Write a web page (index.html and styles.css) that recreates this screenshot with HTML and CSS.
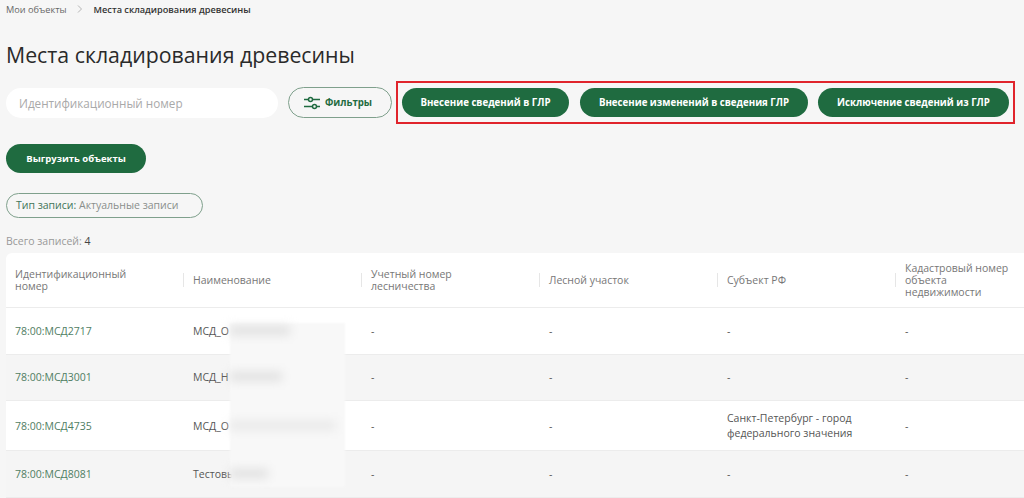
FILE: index.html
```html
<!DOCTYPE html>
<html lang="en">
<head>
    <meta charset="UTF-8">
    <meta name="viewport" content="width=device-width, initial-scale=1.0">
    <title>Места складирования древесины</title>
    <link rel="stylesheet" href="styles.css">
</head>
<body>
    <div class="breadcrumbs">
        <span class="crumb">Мои объекты</span>
        <svg class="crumb-arrow" width="6" height="8" viewBox="0 0 6 8"><path d="M1 0.5L4.5 4L1 7.5" fill="none" stroke="#b5b5b5" stroke-width="1"/></svg>
        <span class="crumb-current">Места складирования древесины</span>
    </div>

    <h1>Места складирования древесины</h1>

    <div class="toolbar">
        <input type="text" class="search-bar" placeholder="Идентификационный номер">
        <button class="filter-button">
            <svg width="16" height="14" viewBox="0 0 16 14" fill="none" stroke="#1f6b40" stroke-width="1.5">
                <path d="M0 3.5H4M9 3.5H16M0 10.5H8M13 10.5H16"/>
                <circle cx="6.5" cy="3.5" r="2"/>
                <circle cx="10.5" cy="10.5" r="2"/>
            </svg>
            Фильтры
        </button>
        <div class="highlight">
            <button class="green-button btn-add">Внесение сведений в ГЛР</button>
            <button class="green-button btn-change">Внесение изменений в сведения ГЛР</button>
            <button class="green-button btn-remove">Исключение сведений из ГЛР</button>
        </div>
    </div>

    <button class="green-button btn-export">Выгрузить объекты</button>

    <div class="chip"><b>Тип записи:</b> Актуальные записи</div>

    <div class="total">Всего записей: <span>4</span></div>

    <div class="table">
        <div class="row head">
            <div class="cell">Идентификационный номер</div>
            <div class="cell">Наименование</div>
            <div class="cell">Учетный номер лесничества</div>
            <div class="cell">Лесной участок</div>
            <div class="cell">Субъект РФ</div>
            <div class="cell cell-narrow">Кадастровый номер объекта недвижимости</div>
        </div>
        <div class="row">
            <div class="cell link">78:00:МСД2717</div>
            <div class="cell">МСД_О</div>
            <div class="cell">-</div>
            <div class="cell">-</div>
            <div class="cell">-</div>
            <div class="cell">-</div>
        </div>
        <div class="row">
            <div class="cell link">78:00:МСД3001</div>
            <div class="cell">МСД_Н</div>
            <div class="cell">-</div>
            <div class="cell">-</div>
            <div class="cell">-</div>
            <div class="cell">-</div>
        </div>
        <div class="row">
            <div class="cell link">78:00:МСД4735</div>
            <div class="cell">МСД_О</div>
            <div class="cell">-</div>
            <div class="cell">-</div>
            <div class="cell">Санкт-Петербург - город федерального значения</div>
            <div class="cell">-</div>
        </div>
        <div class="row">
            <div class="cell link">78:00:МСД8081</div>
            <div class="cell">Тестовы</div>
            <div class="cell">-</div>
            <div class="cell">-</div>
            <div class="cell">-</div>
            <div class="cell">-</div>
        </div>
    </div>

    <!-- blurred patch over the names -->
    <div class="redact">
        <div class="smudge s1"></div>
        <div class="smudge s2"></div>
        <div class="smudge s3"></div>
        <div class="smudge s4"></div>
    </div>
</body>
</html>
```

FILE: styles.css
```css
html, body {
    height: 498px;
    overflow: hidden;
}
body {
    background: #f6f6f6;
    color: #333;
    font-family: "Open Sans", Arial, sans-serif;
    margin: 0;
    padding: 0 0 0 6px;
    position: relative;
}
.breadcrumbs {
    display: flex;
    align-items: center;
    height: 18px;
    font-size: 9.2px;
}
.crumb {
    color: #666;
}
.crumb-arrow {
    margin: 0 11px 0 10px;
}
.crumb-current {
    color: #333;
    font-weight: 600;
}
h1 {
    font-size: 21.3px;
    font-weight: 400;
    line-height: 30px;
    color: #2a2a2a;
    margin: 22px 0 0;
}
.toolbar {
    display: flex;
    align-items: center;
    height: 43px;
    margin-top: 11px;
}
.search-bar {
    width: 272px;
    height: 30px;
    box-sizing: border-box;
    padding: 0 13px;
    border: none;
    border-radius: 15px;
    background: #fff;
    font-family: inherit;
    font-size: 11.7px;
    outline: none;
}
.search-bar::placeholder {
    color: #a9a9a9;
}
.filter-button {
    display: flex;
    align-items: center;
    justify-content: center;
    gap: 5px;
    width: 104px;
    height: 31px;
    margin-left: 10px;
    padding: 0 4px 0 0;
    background: transparent;
    border: 1px solid #7fa08c;
    border-radius: 16px;
    color: #1f6b40;
    font-family: inherit;
    font-size: 9.7px;
    font-weight: 700;
}
.highlight {
    display: flex;
    align-items: center;
    gap: 10px;
    box-sizing: border-box;
    width: 619px;
    height: 43px;
    margin-left: 4px;
    padding: 0 4px;
    border: 2px solid #e0242c;
}
.green-button {
    height: 29px;
    border: none;
    border-radius: 15px;
    padding: 0;
    background: #1f6b40;
    color: #fff;
    font-family: inherit;
    font-size: 9.7px;
    font-weight: 700;
}
.btn-add {
    width: 167px;
}
.btn-change {
    width: 228px;
    margin-left: 1px;
}
.btn-remove {
    width: 191px;
}
.btn-export {
    display: block;
    width: 140px;
    margin-top: 20px;
    font-size: 9.5px;
}
.chip {
    box-sizing: border-box;
    width: 197px;
    height: 25px;
    line-height: 23px;
    margin-top: 20px;
    padding-left: 9px;
    border: 1px solid #7fa08c;
    border-radius: 13px;
    color: #8a8f8c;
    font-size: 10.5px;
}
.chip b {
    color: #3f7458;
    font-weight: 500;
}
.total {
    height: 16px;
    line-height: 16px;
    margin-top: 15px;
    color: #999;
    font-size: 10.5px;
}
.total span {
    color: #444;
}
.table {
    width: 1200px;
    margin-top: 4px;
    font-size: 10.5px;
    line-height: 15px;
    color: #555;
}
.row {
    display: grid;
    grid-template-columns: 177px repeat(5, 178px);
    align-items: center;
    min-height: 45.5px;
    background: #fff;
    border-bottom: 1px solid #ececec;
}
.row:nth-child(odd) {
    background: #f5f5f5;
}
.row.head {
    height: 54px;
    background: #fff;
    border-radius: 6px 0 0 0;
    line-height: 12px;
    color: #777;
}
.cell {
    padding: 10px 30px 9px 10px;
}
.cell:first-child {
    padding-left: 9px;
}
.row.head .cell {
    position: relative;
    padding-top: 0;
    padding-bottom: 0;
}
.row.head .cell + .cell::before {
    content: "";
    position: absolute;
    left: 0;
    top: 50%;
    height: 14px;
    margin-top: -7px;
    border-left: 1px solid #e6e6e6;
}
.row.head .cell-narrow {
    padding-right: 50px;
}
.link {
    color: #4f7d63;
}
.redact {
    position: absolute;
    left: 230px;
    top: 323px;
    width: 115px;
    height: 164px;
    background: #f8f8f8;
    filter: blur(1px);
}
.smudge {
    position: absolute;
    left: 0;
    height: 9px;
    background: #e0e0e0;
    filter: blur(5px);
}
.s1 {
    top: 3px;
    width: 60px;
}
.s2 {
    top: 49px;
    width: 52px;
}
.s3 {
    top: 98px;
    width: 105px;
    background: #e8e8e8;
}
.s4 {
    top: 146px;
    width: 38px;
}
```
